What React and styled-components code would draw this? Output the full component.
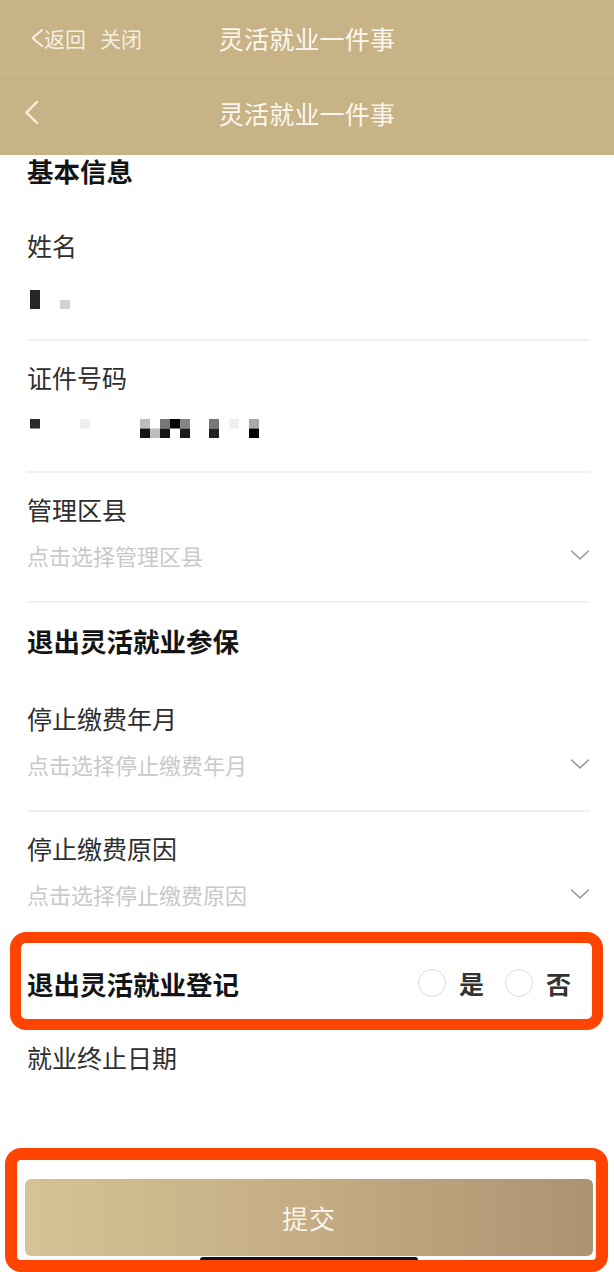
import React from "react";
import styled, { createGlobalStyle } from "styled-components";

const GlobalStyle = createGlobalStyle`
  html, body { margin: 0; padding: 0; background: #ffffff; }
  body { font-family: "Noto Sans CJK SC", "Noto Sans", sans-serif; }
  * { box-sizing: border-box; }
`;

const Page = styled.div`
  position: relative;
  width: 614px;
  height: 1272px;
  overflow: hidden;
  display: flex;
  flex-direction: column;
  background: #ffffff;
`;

const Header = styled.header`
  background: #c7b386;
  color: #fbf6ec;
  flex: none;
`;

const NavBar = styled.div`
  display: grid;
  grid-template-columns: 1fr auto 1fr;
  align-items: center;
  height: ${(p) => p.$h}px;
  padding-top: ${(p) => p.$pt || 0}px;
  padding-bottom: ${(p) => p.$pb || 0}px;
  border-top: ${(p) => (p.$divider ? "1px solid rgba(255,255,255,0.13)" : "none")};
`;

const NavLeft = styled.div`
  display: flex;
  align-items: center;
  gap: ${(p) => p.$gap || 0}px;
  padding-left: ${(p) => p.$pl}px;
  font-size: 21px;
  color: #f5efe2;
`;

const BackLink = styled.span`
  display: inline-flex;
  align-items: center;
`;

const NavTitle = styled.div`
  font-size: 25px;
  letter-spacing: 0.2px;
  color: #fbf7ef;
`;

const Content = styled.main`
  flex: 1;
  padding: 0 24px 0 27px;
  display: flex;
  flex-direction: column;
`;

const SectionTitle = styled.h2`
  margin: 0;
  padding: ${(p) => p.$pt}px 0 ${(p) => p.$pb}px;
  font-size: 26.5px;
  line-height: 32px;
  font-weight: 700;
  color: #141414;
`;

const Field = styled.div`
  padding: ${(p) => p.$pt ?? 20}px 0 ${(p) => p.$pb ?? 25}px;
  border-bottom: ${(p) => (p.$noline ? "none" : "2px solid #f0f0f0")};
`;

const Label = styled.div`
  font-size: 25px;
  line-height: 32px;
  color: #2e2e2e;
`;

const ValueRow = styled.div`
  display: flex;
  align-items: center;
  justify-content: space-between;
  height: 32px;
  margin-top: ${(p) => p.$gap}px;
`;

const Placeholder = styled.span`
  font-size: 22px;
  color: #c9c9c9;
`;

const RadioRow = styled.div`
  position: relative;
  display: flex;
  align-items: center;
  justify-content: space-between;
  min-height: 88px;
  border-bottom: 2px solid #f0f0f0;
`;

const RadioTitle = styled.span`
  font-size: 26.5px;
  font-weight: 700;
  color: #141414;
`;

const RadioGroup = styled.div`
  display: flex;
  align-items: center;
  padding-right: 19px;
`;

const RadioOption = styled.label`
  display: flex;
  align-items: center;
  gap: 13px;
  margin-left: ${(p) => (p.$first ? 0 : 21)}px;
  font-size: 25px;
  font-weight: 700;
  color: #333;
`;

const RadioCircle = styled.span`
  width: 28px;
  height: 28px;
  border-radius: 50%;
  border: 1.5px solid #d9d9d9;
  background: #fff;
`;

const Highlight = styled.div`
  position: absolute;
  top: ${(p) => p.$top}px;
  left: ${(p) => p.$left}px;
  right: ${(p) => p.$right}px;
  bottom: ${(p) => p.$bottom}px;
  border: ${(p) => p.$bw}px solid #ff4300;
  border-radius: 16px;
  pointer-events: none;
  z-index: 3;
`;

const Footer = styled.footer`
  position: relative;
  flex: none;
  height: 124px;
  padding: 31px 21px 16px 25px;
`;

const SubmitButton = styled.button`
  width: 100%;
  height: 77px;
  border: none;
  border-radius: 6px;
  background: linear-gradient(90deg, #d5c296 0%, #c8b188 40%, #b99f7a 75%, #ad9271 100%);
  color: #f8f3ea;
  font-family: inherit;
  font-size: 26px;
  letter-spacing: 1px;
`;

const HomeIndicator = styled.div`
  position: absolute;
  left: 200px;
  width: 218px;
  bottom: 9px;
  height: 6px;
  border-radius: 3px;
  background: #111;
  z-index: 2;
`;

const Chevron = ({ size = 20 }) => (
  <svg width={size} height="10" viewBox="0 0 20 10" fill="none">
    <path d="M1.5 1 L10 8.8 L18.5 1" stroke="#9a9a9a" strokeWidth="1.6" strokeLinecap="round" strokeLinejoin="round" />
  </svg>
);

const BackArrow = ({ w, h, sw }) => (
  <svg width={w} height={h} viewBox={`0 0 ${w} ${h}`} fill="none">
    <path
      d={`M${w - 2} 2 L2.5 ${h / 2} L${w - 2} ${h - 2}`}
      stroke="#f7f1e5"
      strokeWidth={sw}
      strokeLinecap="round"
      strokeLinejoin="round"
    />
  </svg>
);

const Mosaic = ({ cells }) => (
  <svg width="240" height="32" viewBox="0 0 240 32">
    {cells.map(([x, y, w, h, c], i) => (
      <rect key={i} x={x} y={y} width={w} height={h} fill={c} />
    ))}
  </svg>
);

const nameCells = [
  [3, 8, 10, 19, "#262626"],
  [33, 18, 10, 9, "#d2d2d2"],
];

const idCells = [
  [3, 5, 10, 9.5, "#2a2a2a"],
  [53, 5, 10, 9.5, "#efefef"],
  [113, 5, 10, 9.5, "#bdbdbd"],
  [133, 5, 10, 9.5, "#777"],
  [143, 5, 10, 9.5, "#050505"],
  [153, 5, 10, 9.5, "#858585"],
  [182, 5, 10, 9.5, "#777"],
  [202, 5, 10, 9.5, "#efefef"],
  [222, 5, 10, 9.5, "#a8a8a8"],
  [113, 14.5, 10, 9.5, "#151515"],
  [123, 14.5, 10, 9.5, "#bdbdbd"],
  [133, 14.5, 10, 9.5, "#151515"],
  [153, 14.5, 10, 9.5, "#1a1a1a"],
  [182, 14.5, 10, 9.5, "#222"],
  [222, 14.5, 10, 9.5, "#000"],
];

const SelectField = ({ label, placeholder, noline }) => (
  <Field $pb={30} $noline={noline}>
    <Label>{label}</Label>
    <ValueRow $gap={14}>
      <Placeholder>{placeholder}</Placeholder>
      <Chevron />
    </ValueRow>
  </Field>
);

export default function App() {
  return (
    <>
      <GlobalStyle />
      <Page>
        <Header>
          <NavBar $h={73} $pt={2}>
            <NavLeft $pl={30} $gap={14}>
              <BackLink>
                <BackArrow w={14} h={20} sw={2} />
                返回
              </BackLink>
              <span>关闭</span>
            </NavLeft>
            <NavTitle>灵活就业一件事</NavTitle>
            <span />
          </NavBar>
          <NavBar $h={82} $pb={4} $divider>
            <NavLeft $pl={24}>
              <BackArrow w={15} h={25} sw={2.4} />
            </NavLeft>
            <NavTitle>灵活就业一件事</NavTitle>
            <span />
          </NavBar>
        </Header>

        <Content>
          <SectionTitle $pt={0} $pb={22}>基本信息</SectionTitle>
          <Field>
            <Label>姓名</Label>
            <ValueRow $gap={21}>
              <Mosaic cells={nameCells} />
            </ValueRow>
          </Field>
          <Field>
            <Label>证件号码</Label>
            <ValueRow $gap={21}>
              <Mosaic cells={idCells} />
            </ValueRow>
          </Field>
          <SelectField label="管理区县" placeholder="点击选择管理区县" />

          <SectionTitle $pt={22} $pb={25}>退出灵活就业参保</SectionTitle>
          <SelectField label="停止缴费年月" placeholder="点击选择停止缴费年月" />
          <SelectField label="停止缴费原因" placeholder="点击选择停止缴费原因" noline />

          <RadioRow>
            <RadioTitle>退出灵活就业登记</RadioTitle>
            <RadioGroup>
              <RadioOption $first>
                <RadioCircle />
                是
              </RadioOption>
              <RadioOption>
                <RadioCircle />
                否
              </RadioOption>
            </RadioGroup>
            <Highlight $top={-8} $left={-17} $right={-13} $bottom={-4} $bw={11} />
          </RadioRow>

          <Field $pt={13} $noline>
            <Label>就业终止日期</Label>
          </Field>
        </Content>

        <Footer>
          <SubmitButton>提交</SubmitButton>
          <HomeIndicator />
          <Highlight $top={0} $left={5} $right={6} $bottom={0} $bw={12} />
        </Footer>
      </Page>
    </>
  );
}
